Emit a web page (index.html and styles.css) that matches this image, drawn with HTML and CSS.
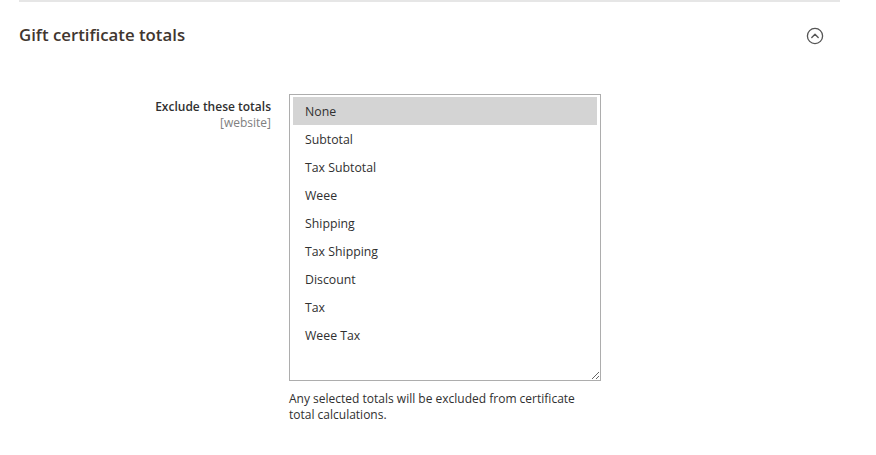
FILE: index.html
```html
<!DOCTYPE html>
<html lang="en">
<head>
    <meta charset="UTF-8">
    <meta name="viewport" content="width=device-width, initial-scale=1.0">
    <title>Gift certificate totals</title>
    <link rel="stylesheet" href="styles.css">
</head>
<body>
    <div class="section">
        <div class="section-head">
            <h2>Gift certificate totals</h2>
            <span class="toggle">
                <svg width="18" height="18" viewBox="0 0 18 18">
                    <circle cx="9" cy="9" r="7.6" fill="none" stroke="#555" stroke-width="1.3"/>
                    <polyline points="5.8,10.4 9,7.2 12.2,10.4" fill="none" stroke="#555" stroke-width="1.4" stroke-linecap="round" stroke-linejoin="round"/>
                </svg>
            </span>
        </div>
        <div class="field">
            <div class="field-label">
                <label for="excludeTotals">Exclude these totals</label>
                <span class="scope">[website]</span>
            </div>
            <div class="field-control">
                <div class="listbox" id="excludeTotals">
                    <div class="option selected">None</div>
                    <div class="option">Subtotal</div>
                    <div class="option">Tax Subtotal</div>
                    <div class="option">Weee</div>
                    <div class="option">Shipping</div>
                    <div class="option">Tax Shipping</div>
                    <div class="option">Discount</div>
                    <div class="option">Tax</div>
                    <div class="option">Weee Tax</div>
                </div>
                <p class="note">Any selected totals will be excluded from certificate total calculations.</p>
            </div>
        </div>
    </div>
</body>
</html>
```

FILE: styles.css
```css
body {
    font-family: 'Open Sans', 'Liberation Sans', sans-serif;
    margin: 0;
    padding: 0;
    background-color: #fff;
    color: #303030;
}
.section {
    margin-left: 19px;
    width: 821px;
    border-top: 2px solid #e6e6e6;
}
.section-head {
    display: flex;
    justify-content: space-between;
    align-items: center;
    height: 64px;
}
.section-head h2 {
    margin: 0;
    font-size: 16.8px;
    font-weight: 600;
    color: #41362f;
}
.toggle {
    display: flex;
    margin-top: 4px;
    margin-right: 16px;
}
.field {
    display: flex;
    gap: 18px;
    margin-top: 28px;
}
.field-label {
    width: 252px;
    text-align: right;
    padding-top: 5px;
    font-size: 12px;
    line-height: 16px;
}
.field-label label {
    display: block;
    font-weight: 600;
    color: #303030;
}
.scope {
    display: block;
    color: #808080;
}
.field-control {
    width: 312px;
}
.listbox {
    box-sizing: border-box;
    height: 287px;
    border: 1px solid #adadad;
    padding: 2px 3px;
    overflow: auto;
    resize: vertical;
    font-size: 12.3px;
}
.option {
    height: 28px;
    line-height: 30px;
    overflow: hidden;
    padding: 0 12px;
    color: #303030;
}
.option.selected {
    background-color: #d4d4d4;
}
.note {
    margin: 10px 0 0;
    font-size: 12px;
    line-height: 16px;
    color: #303030;
}
```
